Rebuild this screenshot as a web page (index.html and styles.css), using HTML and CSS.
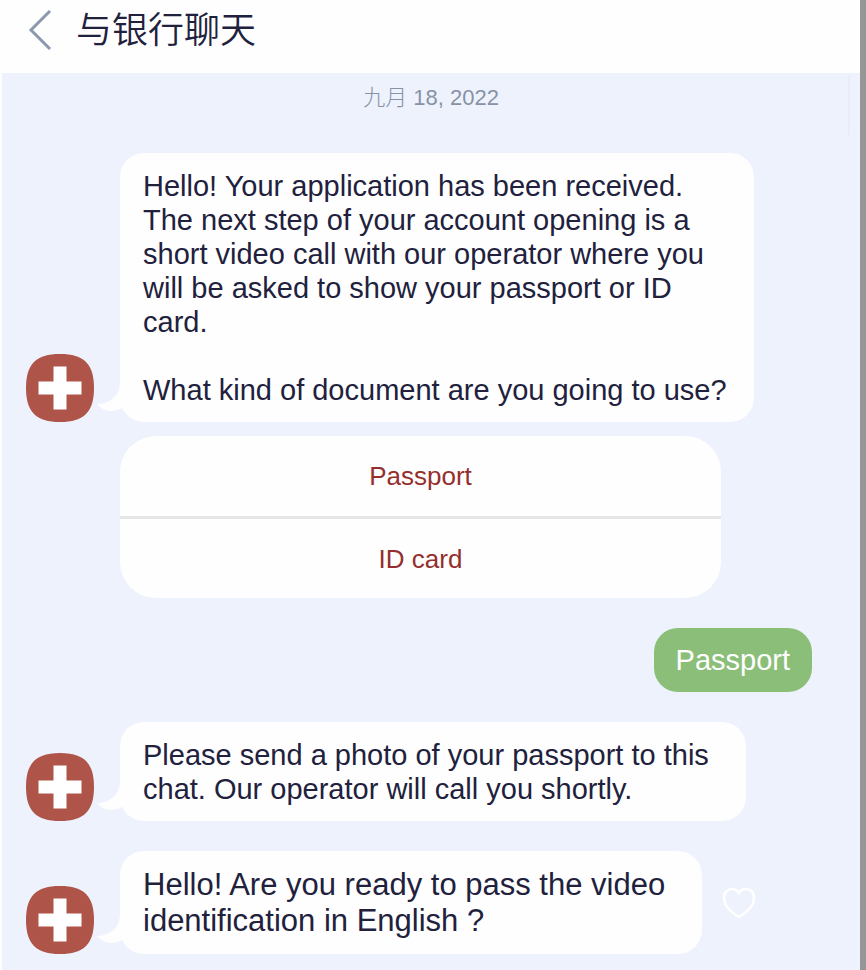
FILE: index.html
```html
<!DOCTYPE html>
<html lang="zh">
<head>
    <meta charset="UTF-8">
    <meta name="viewport" content="width=device-width, initial-scale=1.0">
    <title>与银行聊天</title>
    <link rel="stylesheet" href="styles.css">
</head>
<body>

    <header class="header">
        <button class="back" type="button" aria-label="Back">
            <svg width="24" height="40" viewBox="0 0 24 40" fill="none" stroke="#8b98ad" stroke-width="3">
                <path d="M22 1 L3 20 L22 39"/>
            </svg>
        </button>
        <h1 class="title">与银行聊天</h1>
    </header>

    <main class="chat" lang="en">
        <div class="scrollbar"></div>
        <p class="date">九月 18, 2022</p>

        <div class="message">
            <svg class="avatar" viewBox="0 0 68 68">
                <path d="M34 0 C58 0 68 10 68 34 C68 58 58 68 34 68 C10 68 0 58 0 34 C0 10 10 0 34 0Z" fill="#ae5449"/>
                <path d="M27.500 12.500h13v15h15v13h-15v15h-13v-15h-15v-13h15z" fill="#fff"/>
            </svg>
            <div class="bubble bubble-wide">
                <svg class="tail" viewBox="0 0 40 36"><path d="M24 0 C23 12 14 20 1 20 C7 28 18 29 26 24 L40 20 L40 0Z" fill="#fefefe"/></svg>
                <p>Hello! Your application has been received.<br>The next step of your account opening is a short video call with our operator where you will be asked to show your passport or ID card.</p>
                <p class="question">What kind of document are you going to use?</p>
            </div>
        </div>

        <div class="options">
            <button class="option" type="button">Passport</button>
            <button class="option" type="button">ID card</button>
        </div>

        <p class="reply">Passport</p>

        <div class="message">
            <svg class="avatar" viewBox="0 0 68 68">
                <path d="M34 0 C58 0 68 10 68 34 C68 58 58 68 34 68 C10 68 0 58 0 34 C0 10 10 0 34 0Z" fill="#ae5449"/>
                <path d="M27.500 12.500h13v15h15v13h-15v15h-13v-15h-15v-13h15z" fill="#fff"/>
            </svg>
            <div class="bubble">
                <svg class="tail" viewBox="0 0 40 36"><path d="M24 0 C23 12 14 20 1 20 C7 28 18 29 26 24 L40 20 L40 0Z" fill="#fefefe"/></svg>
                <p>Please send a photo of your passport to this<br>chat. Our operator will call you shortly.</p>
            </div>
        </div>

        <div class="message">
            <svg class="avatar" viewBox="0 0 68 68">
                <path d="M34 0 C58 0 68 10 68 34 C68 58 58 68 34 68 C10 68 0 58 0 34 C0 10 10 0 34 0Z" fill="#ae5449"/>
                <path d="M27.500 12.500h13v15h15v13h-15v15h-13v-15h-15v-13h15z" fill="#fff"/>
            </svg>
            <div class="bubble bubble-large">
                <svg class="tail" viewBox="0 0 40 36"><path d="M24 0 C23 12 14 20 1 20 C7 28 18 29 26 24 L40 20 L40 0Z" fill="#fefefe"/></svg>
                <p>Hello! Are you ready to pass the video<br>identification in English ?</p>
            </div>
            <button class="like" type="button" aria-label="Like">
                <svg width="34" height="32" viewBox="0 0 34 32" fill="none" stroke="#fff" stroke-width="2.500" stroke-linejoin="round">
                    <path d="M17 30 C12 27 2 20 2 11 C2 5 6 2 10 2 C13 2 16 4 17 6.500 C18 4 21 2 24 2 C28 2 32 5 32 11 C32 20 22 27 17 30Z"/>
                </svg>
            </button>
        </div>
    </main>

</body>
</html>
```

FILE: styles.css
```css
* {
    box-sizing: border-box;
}

body {
    margin: 0;
    min-height: 100vh;
    display: flex;
    flex-direction: column;
    background-color: #fefefe;
    border-right: 6px solid #969696;
    font-family: "Liberation Sans", "Noto Sans CJK SC", sans-serif;
    color: #21213d;
}

p {
    margin: 0;
}

button {
    font-family: inherit;
    border: none;
    background: none;
    padding: 0;
    cursor: pointer;
}

.header {
    display: flex;
    align-items: center;
    gap: 24px;
    height: 73px;
    padding: 0 28px 14px;
}

.back {
    display: flex;
}

.title {
    margin: 0;
    padding-bottom: 6px;
    font-family: "Noto Sans CJK SC", sans-serif;
    font-size: 36px;
    line-height: 52px;
    font-weight: 350;
}

.chat {
    position: relative;
    flex: 1;
    display: flex;
    flex-direction: column;
    margin-left: 2px;
    padding: 12px 48px 16px 24px;
    background-color: #eef2fd;
}

.scrollbar {
    position: absolute;
    top: 2px;
    right: 10px;
    width: 2px;
    height: 60px;
    background-color: #e9edf8;
}

.date {
    margin-right: -24px;
    margin-bottom: 42px;
    text-align: center;
    font-size: 22px;
    line-height: 26px;
    font-weight: 300;
    color: #8792a5;
}

.message {
    display: flex;
    align-items: flex-end;
}

.avatar {
    flex: none;
    width: 68px;
    height: 68px;
    margin-right: 26px;
}

.bubble {
    position: relative;
    padding: 16px 37px 15px 23px;
    border-radius: 24px;
    background-color: #fefefe;
    font-size: 29px;
    line-height: 34px;
}

.bubble p {
    position: relative;
}

.bubble-wide {
    max-width: 634px;
    padding-right: 20px;
}

.bubble-large {
    font-size: 31px;
    line-height: 36px;
}

.question {
    margin-top: 34px;
}

.tail {
    position: absolute;
    left: -24px;
    bottom: 2px;
    width: 40px;
    height: 36px;
}

.options {
    display: flex;
    flex-direction: column;
    width: 100%;
    max-width: 695px;
    margin-top: 14px;
    margin-bottom: 30px;
    padding-left: 94px;
}

.option {
    height: 79px;
    background-color: #fefefe;
    color: #942f2d;
    font-size: 26px;
    line-height: 30px;
}

.option:first-child {
    height: 83px;
    border-bottom: 3px solid #e6e6e8;
    border-radius: 36px 36px 0 0;
}

.option:last-child {
    border-radius: 0 0 36px 36px;
}

.reply {
    align-self: flex-end;
    margin-bottom: 30px;
    padding: 15px 22px;
    border-radius: 24px;
    background-color: #8bbe78;
    color: #fefefe;
    font-size: 29px;
    line-height: 34px;
}

.reply + .message {
    margin-bottom: 30px;
}

.like {
    display: flex;
    align-self: center;
    margin-left: 20px;
}
```
